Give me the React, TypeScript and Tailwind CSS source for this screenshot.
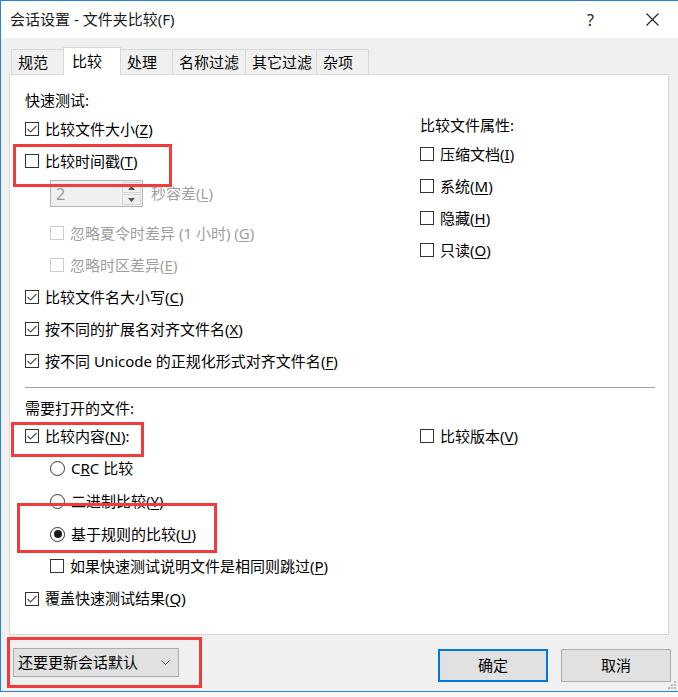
import React from 'react';

const font = { fontFamily: '"Noto Sans", "Noto Sans CJK SC", sans-serif' };

function Box({ checked = false, disabled = false }: { checked?: boolean; disabled?: boolean }) {
  return (
    <span
      className={
        disabled
          ? 'w-[14px] h-[14px] border border-[#cccccc] bg-white flex items-center justify-center shrink-0'
          : 'w-[14px] h-[14px] border border-[#333333] bg-white flex items-center justify-center shrink-0'
      }
    >
      {checked && (
        <svg width="12" height="12" viewBox="0 0 12 12">
          <polyline points="1.5,6 4.5,9 10.5,3" fill="none" stroke="#555555" strokeWidth="1.2" />
        </svg>
      )}
    </span>
  );
}

function Radio({ on = false }: { on?: boolean }) {
  return (
    <span className="w-[15px] h-[15px] rounded-full border border-[#333333] bg-white flex items-center justify-center shrink-0">
      {on && <span className="w-[8px] h-[8px] rounded-full bg-[#1a1a1a]" />}
    </span>
  );
}

// label with an underlined access key, e.g. 比较文件大小(Z)
function Label({ text, k, tail = ')' }: { text: string; k?: string; tail?: string }) {
  if (!k) return <span>{text}</span>;
  return (
    <span className="whitespace-nowrap">
      {text}(<u className="underline-offset-2">{k}</u>{tail}
    </span>
  );
}

function CheckRow({ checked, disabled, indent, children, h = 'h-[32px]' }: any) {
  return (
    <div
      className={`flex items-center gap-[6px] ${h} ${indent ? 'pl-[25px]' : ''} ${disabled ? 'text-[#a0a0a0]' : 'text-black'}`}
    >
      <Box checked={checked} disabled={disabled} />
      {children}
    </div>
  );
}

function RadioRow({ on, children, h = 'h-[33px]' }: any) {
  return (
    <div className={`flex items-center gap-[6px] pl-[25px] ${h}`}>
      <Radio on={on} />
      {children}
    </div>
  );
}

const tabs = [
  { name: '规范', w: 'w-[53px]' },
  { name: '比较', w: 'w-[58px]', active: true },
  { name: '处理', w: 'w-[53px]' },
  { name: '名称过滤', w: 'w-[74px]' },
  { name: '其它过滤', w: 'w-[72px]' },
  { name: '杂项', w: 'w-[53px]' },
];

export default function App() {
  return (
    <div className="relative w-[678px] h-[697px] overflow-hidden bg-[#f7f7f7] text-[15px] leading-none" style={font}>
      {/* window frame */}
      <div className="h-[692px] border-t border-l border-b border-[#2a80d5] bg-[#f0f0f0] flex flex-col">
        {/* title bar */}
        <div className="h-[37px] bg-white flex items-center pl-[9px] shrink-0">
          <span className="text-[15px] text-[#1a1a1a]">会话设置 - 文件夹比较(F)</span>
          <span className="ml-auto w-[14px] text-[16px] text-[#222] mr-[45px]">?</span>
          <svg width="13" height="13" viewBox="0 0 13 13" className="mr-[19px]">
            <path d="M0.5 0.5 L12.5 12.5 M12.5 0.5 L0.5 12.5" stroke="#222" strokeWidth="1.1" />
          </svg>
        </div>

        {/* tabs */}
        <div className="pl-[8px] pt-[8px] shrink-0">
          <div className="flex items-end h-[28px] pl-[2px]">
            {tabs.map((t, i) =>
              t.active ? (
                <div
                  key={t.name}
                  className={`${t.w} h-[28px] -ml-px relative z-10 bg-white border-t border-l border-r border-[#d9d9d9] pl-[8px] pt-[6px] -mb-px`}
                >
                  {t.name}
                </div>
              ) : (
                <div
                  key={t.name}
                  className={`${t.w} h-[25px] ${i === 0 ? '' : '-ml-px'} bg-[#f0f0f0] border-t border-l border-r border-[#d9d9d9] pl-[6px] pt-[5px]`}
                >
                  {t.name}
                </div>
              )
            )}
          </div>

          {/* panel */}
          <div className="w-[660px] h-[561px] bg-white border border-[#d9d9d9] pl-[15px] pt-[13px]">
            <div className="grid grid-cols-[394px_1fr]">
              <div>
                <div className="h-[25px] flex items-center">快速测试:</div>
                <CheckRow checked>
                  <Label text="比较文件大小" k="Z" />
                </CheckRow>
                <CheckRow>
                  <Label text="比较时间戳" k="T" />
                </CheckRow>
                <div className="h-[40px] pl-[25px] pt-[3px] flex items-start gap-[8px]">
                  <div className="w-[93px] h-[27px] border border-[#b4b4b4] bg-[#f0f0f0] flex">
                    <span className="flex-1 pl-[5px] flex items-center text-[#9a9a9a] text-[16px]">2</span>
                    <div className="w-[20px] flex flex-col gap-px py-px pr-px">
                      <span className="flex-1 border border-[#d6d6d6] flex items-center justify-center">
                        <svg width="7" height="4" viewBox="0 0 7 4"><polygon points="0,4 7,4 3.5,0" fill="#555" /></svg>
                      </span>
                      <span className="flex-1 border border-[#d6d6d6] flex items-center justify-center">
                        <svg width="7" height="4" viewBox="0 0 7 4"><polygon points="0,0 7,0 3.5,4" fill="#555" /></svg>
                      </span>
                    </div>
                  </div>
                  <span className="h-[27px] flex items-center text-[#a0a0a0]">
                    <Label text="秒容差" k="L" />
                  </span>
                </div>
                <CheckRow disabled indent>
                  <Label text="忽略夏令时差异 (1 小时) " k="G" />
                </CheckRow>
                <CheckRow disabled indent>
                  <Label text="忽略时区差异" k="E" />
                </CheckRow>
                <CheckRow checked>
                  <Label text="比较文件名大小写" k="C" />
                </CheckRow>
                <CheckRow checked>
                  <Label text="按不同的扩展名对齐文件名" k="X" />
                </CheckRow>
                <CheckRow checked>
                  <Label text="按不同 Unicode 的正规化形式对齐文件名" k="F" />
                </CheckRow>
              </div>

              <div className="pl-[1px] pt-[24px]">
                <div className="h-[26px] flex items-center">比较文件属性:</div>
                <CheckRow>
                  <Label text="压缩文档" k="I" />
                </CheckRow>
                <CheckRow>
                  <Label text="系统" k="M" />
                </CheckRow>
                <CheckRow>
                  <Label text="隐藏" k="H" />
                </CheckRow>
                <CheckRow>
                  <Label text="只读" k="O" />
                </CheckRow>
              </div>
            </div>

            <div className="mt-[10px] w-[630px] h-px bg-[#a0a0a0]" />

            <div className="grid grid-cols-[394px_1fr] pt-[8px]">
              <div>
                <div className="h-[24px] flex items-center">需要打开的文件:</div>
                <CheckRow checked>
                  <Label text="比较内容" k="N" tail="):" />
                </CheckRow>
                <RadioRow>
                  <span>
                    C<u>R</u>C 比较
                  </span>
                </RadioRow>
                <RadioRow>
                  <Label text="二进制比较" k="Y" />
                </RadioRow>
                <RadioRow on h="h-[32px]">
                  <Label text="基于规则的比较" k="U" />
                </RadioRow>
                <CheckRow indent>
                  <Label text="如果快速测试说明文件是相同则跳过" k="P" />
                </CheckRow>
                <CheckRow checked h="h-[33px]">
                  <Label text="覆盖快速测试结果" k="Q" />
                </CheckRow>
              </div>
              <div className="pl-[1px] pt-[24px]">
                <CheckRow>
                  <Label text="比较版本" k="V" />
                </CheckRow>
              </div>
            </div>
          </div>
        </div>

        {/* bottom buttons */}
        <div className="flex items-start pl-[12px] pt-[13px] w-[670px]">
          <div className="w-[166px] h-[29px] border border-[#adadad] bg-[#e1e1e1] flex items-center pl-[4px] pr-[8px]">
            <span>还要更新会话默认</span>
            <svg width="9" height="5" viewBox="0 0 9 5" className="ml-auto">
              <polyline points="0.5,0.5 4.5,4.5 8.5,0.5" fill="none" stroke="#555" strokeWidth="1" />
            </svg>
          </div>
          <button className="ml-auto w-[110px] h-[33px] mt-px border-2 border-[#0078d7] bg-[#e1e1e1] flex items-center justify-center text-[15px]">
            确定
          </button>
          <button className="ml-[13px] w-[110px] h-[33px] mt-px border border-[#adadad] bg-[#e1e1e1] flex items-center justify-center text-[15px]">
            取消
          </button>
        </div>
      </div>

      {/* resize grip */}
      <svg width="10" height="10" viewBox="0 0 10 10" className="absolute left-[667px] top-[680px]">
        <rect x="7" y="1" width="2" height="2" fill="#b8b8b8" />
        <rect x="4" y="4" width="2" height="2" fill="#b8b8b8" />
        <rect x="7" y="4" width="2" height="2" fill="#b8b8b8" />
        <rect x="1" y="7" width="2" height="2" fill="#b8b8b8" />
        <rect x="4" y="7" width="2" height="2" fill="#b8b8b8" />
        <rect x="7" y="7" width="2" height="2" fill="#b8b8b8" />
      </svg>

      {/* red annotation boxes */}
      <div className="absolute left-[13px] top-[144px] w-[159px] h-[43px] border-[3px] border-[#f43b3b]" />
      <div className="absolute left-[11px] top-[422px] w-[133px] h-[35px] border-[3px] border-[#f43b3b]" />
      <div className="absolute left-[17px] top-[503px] w-[200px] h-[50px] border-[3px] border-[#f43b3b]" />
      <div className="absolute left-[7px] top-[637px] w-[195px] h-[51px] border-[3px] border-[#f43b3b]" />
    </div>
  );
}
